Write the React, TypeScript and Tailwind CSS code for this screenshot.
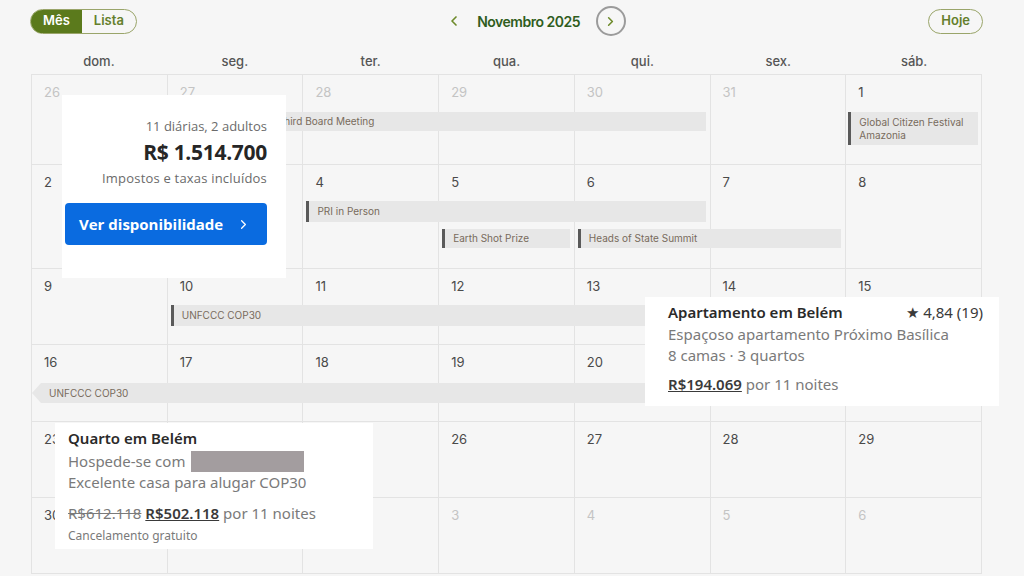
import { ChevronLeft, ChevronRight } from 'lucide-react';

type Day = { n: number; muted?: boolean };

const dayNames = ['dom.', 'seg.', 'ter.', 'qua.', 'qui.', 'sex.', 'sáb.'];

const colStart = ['col-start-1', 'col-start-2', 'col-start-3', 'col-start-4', 'col-start-5', 'col-start-6', 'col-start-7'];

function mk(start: number, count: number, mutedUntil = 0): Day[] {
  const out: Day[] = [];
  for (let i = 0; i < count; i++) {
    const n = start + i > 31 ? start + i - 31 : start + i;
    out.push({ n, muted: i < mutedUntil });
  }
  return out;
}

// Week rows with hand-tuned heights
const weeks: { days: Day[]; rows: string }[] = [
  { days: [...mk(26, 6, 6), { n: 1 }], rows: 'grid-rows-[37px_34px_1fr] h-[90px]' },
  { days: mk(2, 7), rows: 'grid-rows-[36px_28px_1fr] h-[104px]' },
  { days: mk(9, 7), rows: 'grid-rows-[36px_1fr] h-[76px]' },
  { days: mk(16, 7), rows: 'grid-rows-[38px_1fr] h-[77px]' },
  { days: mk(23, 7), rows: 'grid-rows-[36px_1fr] h-[76px]' },
  { days: [{ n: 30 }, ...mk(1, 6, 6)], rows: 'grid-rows-[36px_1fr] h-[76px]' },
];

function DayCells({ days }: { days: Day[] }) {
  return (
    <>
      {days.map((d, i) => (
        <div
          key={i}
          className={`${colStart[i]} row-span-full border-r border-b border-[#e3e3e3] px-[12px] pt-[9px] text-[13px] leading-[16px] ${
            d.muted ? 'text-[#c4c4c4]' : 'text-[#4a4a4a]'
          }`}
        >
          {d.n}
        </div>
      ))}
    </>
  );
}

const barBase = 'self-start z-[1] bg-[#e7e7e7] text-[10px] text-[#786b5c] flex items-center truncate';

function Calendar() {
  return (
    <div className="ml-[31px] w-[951px] border-t border-l border-[#e3e3e3]">
      {/* week 1 */}
      <div className={`grid grid-cols-7 ${weeks[0].rows}`}>
        <DayCells days={weeks[0].days} />
        <div className={`${barBase} row-start-2 col-start-2 col-end-6 h-[19px] ml-[3px] mr-[5px] pl-[8px] border-l-[3px] border-[#5a5a5a]`}>
          Green Climate Fund Third Board Meeting
        </div>
        <div className={`${barBase} row-start-2 col-start-7 h-[33px] ml-[2px] mr-[4px] pl-[8px] border-l-[3px] border-[#5a5a5a] leading-[13px] whitespace-normal`}>
          Global Citizen Festival Amazonia
        </div>
      </div>
      {/* week 2 */}
      <div className={`grid grid-cols-7 ${weeks[1].rows}`}>
        <DayCells days={weeks[1].days} />
        <div className={`${barBase} row-start-2 col-start-3 col-end-6 h-[21px] ml-[3px] mr-[5px] pl-[8px] border-l-[3px] border-[#5a5a5a]`}>
          PRI in Person
        </div>
        <div className={`${barBase} row-start-3 col-start-4 col-end-5 h-[19px] ml-[3px] mr-[5px] pl-[8px] border-l-[3px] border-[#5a5a5a]`}>
          Earth Shot Prize
        </div>
        <div className={`${barBase} row-start-3 col-start-5 col-end-7 h-[19px] ml-[3px] mr-[5px] pl-[8px] border-l-[3px] border-[#5a5a5a]`}>
          Heads of State Summit
        </div>
      </div>
      {/* week 3 */}
      <div className={`grid grid-cols-7 ${weeks[2].rows}`}>
        <DayCells days={weeks[2].days} />
        <div className={`${barBase} row-start-2 col-start-2 col-end-8 h-[21px] ml-[3px] pl-[8px] border-l-[3px] border-[#5a5a5a] text-[9px]`}>
          UNFCCC COP30
        </div>
      </div>
      {/* week 4 */}
      <div className={`grid grid-cols-7 ${weeks[3].rows}`}>
        <DayCells days={weeks[3].days} />
        <div className={`${barBase} row-start-2 col-start-1 col-end-8 h-[20px] pl-[17px] text-[9px] [clip-path:polygon(9px_0,100%_0,100%_100%,9px_100%,0_50%)]`}>
          UNFCCC COP30
        </div>
      </div>
      <div className={`grid grid-cols-7 ${weeks[4].rows}`}>
        <DayCells days={weeks[4].days} />
      </div>
      <div className={`grid grid-cols-7 ${weeks[5].rows}`}>
        <DayCells days={weeks[5].days} />
      </div>
    </div>
  );
}

function App() {
  return (
    <div className="relative w-[1024px] h-[576px] overflow-hidden bg-[#f6f6f6] font-['Inter',sans-serif]">
      {/* Header */}
      <div className="flex items-center justify-between h-[42px] pl-[30px] pr-[41px]">
        <div className="flex h-[25px] rounded-full border border-[#9aa56a] overflow-hidden text-[13px] font-semibold">
          <span className="flex items-center bg-[#5b7a1c] text-white px-[12px]">Mês</span>
          <span className="flex items-center text-[#647f2c] px-[12px]">Lista</span>
        </div>
        <div className="flex items-center ml-[7px]">
          <ChevronLeft className="w-[16px] h-[16px] text-[#6d8a2a]" strokeWidth={2.5} />
          <span className="ml-[15px] text-[14px] font-semibold tracking-[-0.5px] text-[#2f5d1d]">Novembro 2025</span>
          <span className="ml-[16px] flex items-center justify-center w-[30px] h-[30px] rounded-full border-2 border-[#9b9b9b]">
            <ChevronRight className="w-[15px] h-[15px] text-[#6d8a2a]" strokeWidth={2.5} />
          </span>
        </div>
        <span className="flex items-center h-[25px] px-[12px] rounded-full border border-[#9aa56a] text-[13px] font-semibold text-[#647f2c]">
          Hoje
        </span>
      </div>

      {/* Day names */}
      <div className="ml-[31px] w-[951px] grid grid-cols-7 h-[32px] pt-[8px] items-center">
        {dayNames.map((d) => (
          <div key={d} className="text-center text-[13px] font-medium text-[#555]">
            {d}
          </div>
        ))}
      </div>

      <Calendar />

      {/* Booking summary card */}
      <div className="absolute z-20 left-[62px] top-[95px] w-[224px] h-[183px] bg-white pt-[22px] pr-[19px] pl-[3px] flex flex-col items-end font-['Open_Sans',sans-serif]">
        <div className="text-[13px] leading-[18px] text-[#6b6b6b]">11 diárias, 2 adultos</div>
        <div className="mt-[3px] text-[21px] leading-[28px] font-bold text-[#262626] tracking-[-0.3px]">R$ 1.514.700</div>
        <div className="mt-[3px] text-[13px] leading-[18px] text-[#6b6b6b] tracking-[0.2px]">Impostos e taxas incluídos</div>
        <div className="mt-[16px] w-full h-[42px] rounded-[4px] bg-[#0a6be0] flex items-center justify-between pl-[14px] pr-[16px] text-white">
          <span className="text-[15px] font-bold">Ver disponibilidade</span>
          <ChevronRight className="w-[15px] h-[15px]" strokeWidth={2} />
        </div>
      </div>

      {/* Apartment card */}
      <div className="absolute z-20 left-[645px] top-[297px] w-[354px] h-[109px] bg-white pl-[23px] pr-[16px] pt-[5px] text-[15px] font-['Noto_Sans',sans-serif]">
        <div className="flex justify-between leading-[21px]">
          <span className="font-semibold text-[#2a2a2a]">Apartamento em Belém</span>
          <span className="text-[#3a3a3a]">★ 4,84 (19)</span>
        </div>
        <div className="leading-[21px] text-[#7a7a7a] mt-[1px]">Espaçoso apartamento Próximo Basílica</div>
        <div className="leading-[21px] text-[#7a7a7a]">8 camas · 3 quartos</div>
        <div className="leading-[21px] mt-[8px] text-[#7a7a7a]">
          <span className="font-semibold text-[#3a3a3a] underline">R$194.069</span> por 11 noites
        </div>
      </div>

      {/* Room card */}
      <div className="absolute z-20 left-[55px] top-[423px] w-[318px] h-[126px] bg-white pl-[13px] pt-[5px] text-[15px] font-['Noto_Sans',sans-serif]">
        <div className="leading-[21px] font-semibold text-[#2a2a2a]">Quarto em Belém</div>
        <div className="flex items-center leading-[21px] text-[#7a7a7a] mt-[2px]">
          Hospede-se com
          <span className="ml-[6px] inline-block w-[113px] h-[21px] bg-[#a39d9f]" />
        </div>
        <div className="leading-[21px] text-[#7a7a7a]">Excelente casa para alugar COP30</div>
        <div className="leading-[21px] mt-[10px] text-[#7a7a7a]">
          <span className="line-through">R$612.118</span>{' '}
          <span className="font-semibold text-[#3a3a3a] underline">R$502.118</span> por 11 noites
        </div>
        <div className="text-[12px] leading-[18px] mt-[3px] text-[#7a7a7a]">Cancelamento gratuito</div>
      </div>
    </div>
  );
}

export default App;
